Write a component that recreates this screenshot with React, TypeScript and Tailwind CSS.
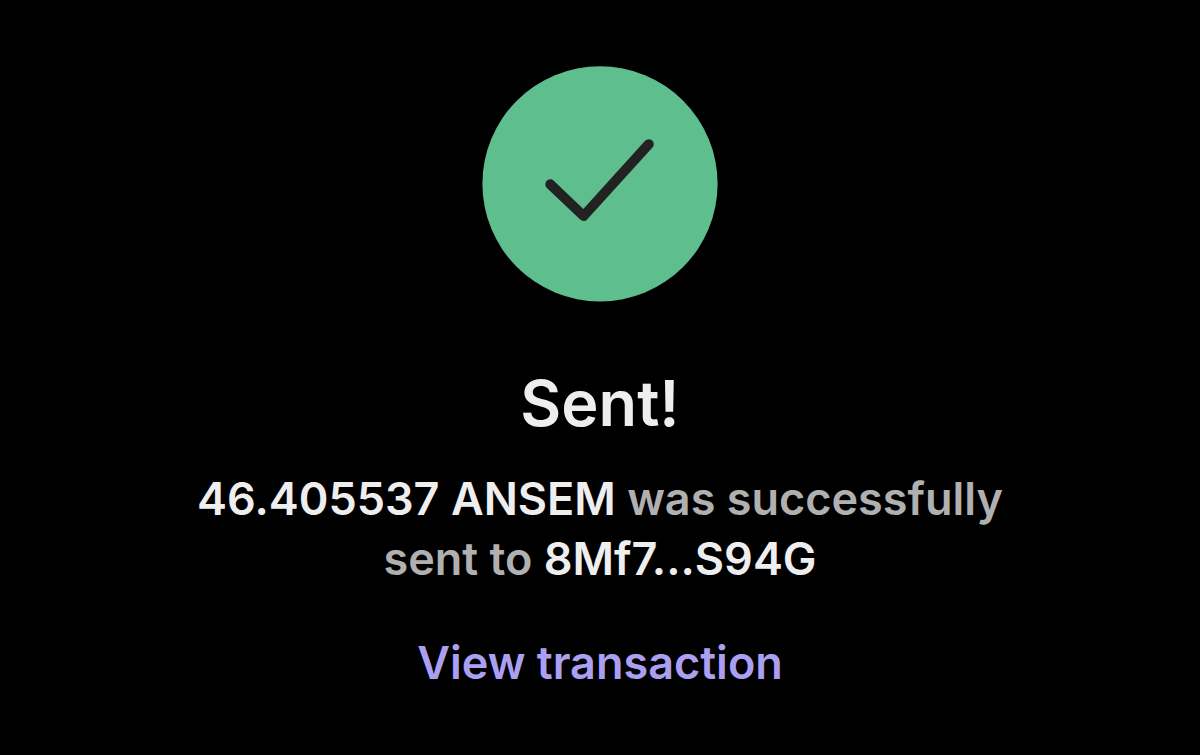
import React from 'react';

interface TransferReceipt {
  amount: string;
  token: string;
  recipient: string;
}

const receipt: TransferReceipt = {
  amount: '46.405537',
  token: 'ANSEM',
  recipient: '8Mf7...S94G'
};

const SuccessIcon: React.FC = () => (
  <svg className="w-[236px] h-[236px]" viewBox="0 0 236 236" fill="none" aria-hidden="true">
    <circle cx="118" cy="117.8" r="117.6" fill="#5fbe8e" />
    <path
      d="M68.3 118.3 L101.6 150 L166.8 78.2"
      stroke="#222222"
      strokeWidth="10"
      strokeLinecap="round"
      strokeLinejoin="round"
    />
  </svg>
);

const App: React.FC = () => {
  return (
    <main className="min-h-screen bg-black flex flex-col items-center px-6 pt-[66px] pb-16 text-center font-['Inter',sans-serif]">
      <SuccessIcon />

      <h1 className="mt-16 text-[63px] leading-[75px] font-semibold text-[#eeeeee]">Sent!</h1>

      {/* Transfer summary */}
      <p className="mt-7 max-w-[840px] text-[45px] leading-[60px] font-semibold text-[#b0b0b0]">
        <span className="text-[#eeeeee]">{receipt.amount} {receipt.token}</span> was successfully sent to{' '}
        <span className="text-[#eeeeee]">{receipt.recipient}</span>
      </p>

      <a href="#transaction" className="mt-11 text-[45px] leading-[60px] font-semibold text-[#ab9ff2]">
        View transaction
      </a>
    </main>
  );
};

export default App;
